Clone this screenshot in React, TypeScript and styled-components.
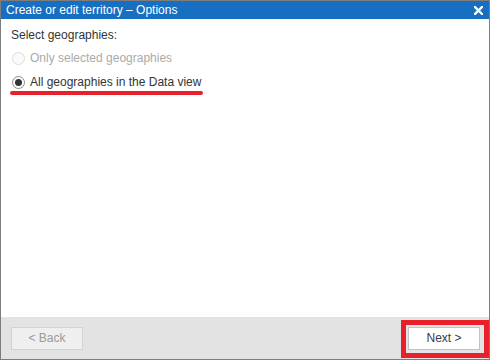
import styled, { createGlobalStyle } from 'styled-components';

const GlobalStyle = createGlobalStyle`
  html, body {
    margin: 0;
    padding: 0;
    background: #ffffff;
  }
  * {
    box-sizing: border-box;
  }
`;

function App() {
  return (
    <>
      <GlobalStyle />
      <Dialog>
        <TitleBar>
          <TitleText>Create or edit territory – Options</TitleText>
          <CloseButton aria-label="Close">
            <svg width="9" height="9" viewBox="0 0 9 9">
              <path d="M1 1 L8 8 M8 1 L1 8" stroke="#ffffff" strokeWidth="2.4" strokeLinecap="square" />
            </svg>
          </CloseButton>
        </TitleBar>
        <Content>
          <Heading>Select geographies:</Heading>
          <OptionRow $disabled>
            <Radio $disabled />
            <span>Only selected geographies</span>
          </OptionRow>
          <OptionRow $marked>
            <Radio $checked />
            <span>All geographies in the Data view</span>
          </OptionRow>
        </Content>
        <Footer>
          <Button $disabled>&lt; Back</Button>
          <Highlight>
            <Button>Next &gt;</Button>
          </Highlight>
        </Footer>
      </Dialog>
    </>
  );
}

export default App;

const Dialog = styled.div`
  width: 490px;
  height: 360px;
  display: flex;
  flex-direction: column;
  border: 1px solid #7d7d7d;
  background: #ffffff;
  font-family: 'Liberation Sans', Arial, sans-serif;
  font-size: 12px;
  color: #333333;
`;

// Синяя полоса заголовка
const TitleBar = styled.div`
  height: 18px;
  flex: none;
  display: flex;
  align-items: center;
  justify-content: space-between;
  padding: 0 5px 0 5px;
  background: #176fc1;
  color: #ffffff;
`;

const TitleText = styled.span`
  font-size: 12px;
  line-height: 18px;
`;

const CloseButton = styled.span`
  display: flex;
  align-items: center;
  justify-content: center;
  width: 12px;
  height: 12px;
  margin-top: 1px;
`;

// Основная область с вариантами
const Content = styled.div`
  flex: 1;
  display: flex;
  flex-direction: column;
  align-items: flex-start;
  padding: 9px 10px;
`;

const Heading = styled.div`
  line-height: 14px;
  margin-bottom: 4px;
`;

const OptionRow = styled.label<{ $disabled?: boolean; $marked?: boolean }>`
  position: relative;
  display: inline-flex;
  align-items: center;
  gap: 5px;
  height: 24px;
  line-height: 24px;
  padding-left: 1px;
  color: ${p => (p.$disabled ? '#aaaaaa' : '#333333')};
  ${p =>
    p.$marked &&
    `
    &::after {
      content: '';
      position: absolute;
      left: -1px;
      right: -2px;
      bottom: -1px;
      height: 4px;
      border-radius: 2px;
      background: #e8202a;
    }
  `}
`;

const Radio = styled.span<{ $disabled?: boolean; $checked?: boolean }>`
  position: relative;
  width: 13px;
  height: 13px;
  border-radius: 50%;
  border: 1px solid ${p => (p.$disabled ? '#dcdcdc' : '#8a8a8a')};
  background: ${p => (p.$disabled ? '#fafafa' : '#ffffff')};
  flex: none;
  &::after {
    content: '';
    display: ${p => (p.$checked ? 'block' : 'none')};
    position: absolute;
    left: 2px;
    top: 2px;
    width: 7px;
    height: 7px;
    border-radius: 50%;
    background: #333333;
  }
`;

// Нижняя панель с кнопками
const Footer = styled.div`
  height: 42px;
  flex: none;
  display: flex;
  align-items: center;
  justify-content: space-between;
  padding: 0 9px 0 10px;
  background: #e3e3e3;
`;

const Button = styled.button<{ $disabled?: boolean }>`
  width: 72px;
  height: 23px;
  padding: 0;
  font-family: 'Liberation Sans', Arial, sans-serif;
  font-size: 12px;
  border: 1px solid ${p => (p.$disabled ? '#d2d2d2' : '#c2c2c2')};
  background: ${p => (p.$disabled ? '#efefef' : '#ffffff')};
  color: ${p => (p.$disabled ? '#9a9a9a' : '#3a3a4a')};
  border-radius: 0;
`;

// Красная рамка поверх кнопки Next
const Highlight = styled.div`
  position: relative;
  display: flex;
  &::before {
    content: '';
    position: absolute;
    left: -7px;
    top: -7px;
    right: -9px;
    bottom: -8px;
    border: 5px solid #e8202a;
    pointer-events: none;
  }
`;
